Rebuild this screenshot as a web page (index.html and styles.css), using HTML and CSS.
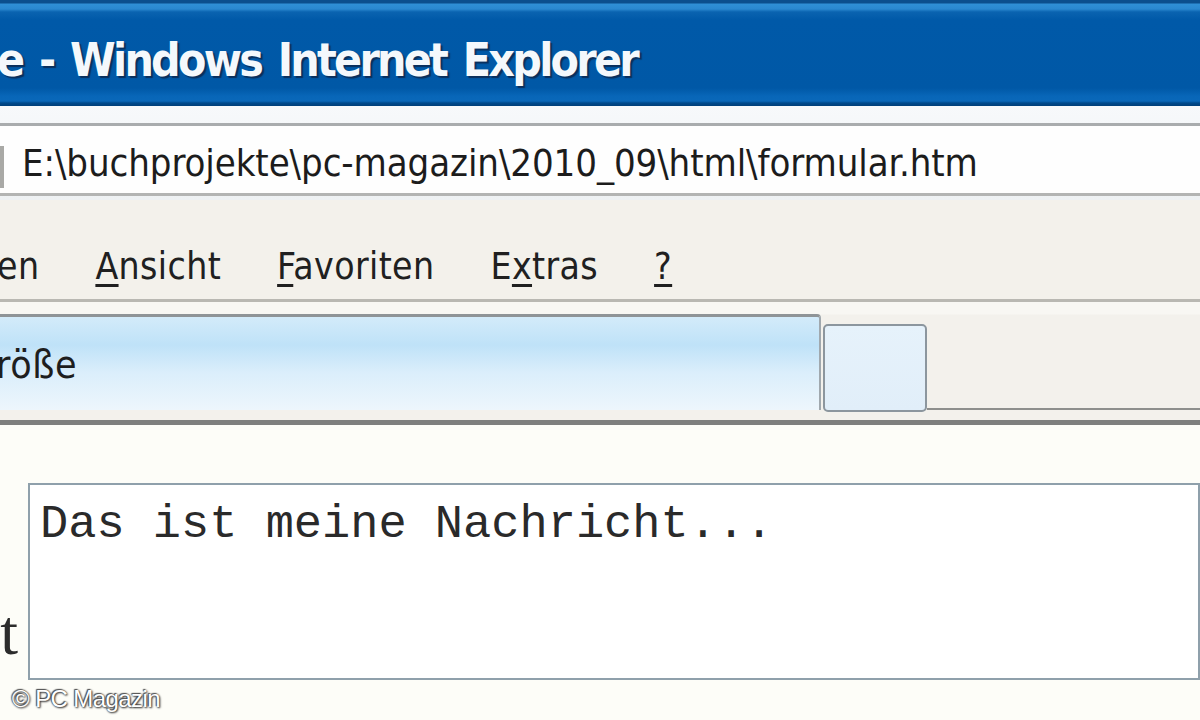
FILE: index.html
```html
<!DOCTYPE html>
<html lang="de">
<head>
<meta charset="utf-8">
<title>formular.htm - Windows Internet Explorer</title>
<link rel="stylesheet" href="styles.css">
</head>
<body>
<div class="window">
  <header class="titlebar">
    <span class="title">e - Windows Internet Explorer</span>
  </header>
  <div class="addrband">
    <div class="addrfield">
      <span class="addricon"></span>
      <span class="addrtext">E:\buchprojekte\pc-magazin\2010_09\html\formular.htm</span>
    </div>
  </div>
  <nav class="menubar">
    <span class="menuitem">en</span>
    <span class="menuitem"><u>A</u>nsicht</span>
    <span class="menuitem"><u>F</u>avoriten</span>
    <span class="menuitem">E<u>x</u>tras</span>
    <span class="menuitem"><u>?</u></span>
  </nav>
  <div class="tabbar">
    <div class="tabrow">
      <div class="tab active"><span class="tablabel">röße</span></div>
      <div class="tab newtab"></div>
      <div class="tabfill"></div>
    </div>
  </div>
  <main class="content">
    <div class="formrow">
      <label class="label" for="msg">t</label>
      <textarea id="msg" class="message">Das ist meine Nachricht...</textarea>
    </div>
    <div class="watermark">© PC Magazin</div>
  </main>
</div>
</body>
</html>
```
FILE: styles.css
```css
html, body {
  margin: 0;
  padding: 0;
}
body {
  width: 1200px;
  height: 720px;
  overflow: hidden;
  background: #fdfdf8;
}
.window {
  position: relative;
  width: 1200px;
  height: 720px;
  overflow: hidden;
  display: flex;
  flex-direction: column;
}

/* Title bar */
.titlebar {
  height: 106px;
  flex: none;
  display: flex;
  align-items: center;
  box-sizing: border-box;
  padding-top: 14px;
  background: linear-gradient(to bottom,
    #0b4f8e 0px, #0b4f8e 3px,
    #2f8fd6 4px, #2a88d0 9px,
    #0a63b0 12px, #0059a8 20px,
    #0058a6 88px, #0866b8 96px,
    #0a68b9 101px, #004a8c 103px, #003f7a 106px);
}
.title {
  font-family: "DejaVu Sans Condensed", "DejaVu Sans", sans-serif;
  font-weight: bold;
  font-size: 46px;
  color: #f4f8fc;
  letter-spacing: -2.75px;
  word-spacing: 5px;
  text-shadow: 2px 2px 1px #0a2f5c;
  white-space: nowrap;
  margin-left: -3px;
}

/* Address band */
.addrband {
  height: 94px;
  flex: none;
  box-sizing: border-box;
  padding-top: 17px;
  background: linear-gradient(to bottom, #f7f9fb, #eef1f3);
}
.addrfield {
  height: 73px;
  box-sizing: border-box;
  border-top: 3px solid #a9acae;
  border-bottom: 3px solid #b3b4b3;
  background: #fefefe;
  display: flex;
  align-items: center;
}
.addricon {
  width: 4px;
  height: 42px;
  margin-top: 14px;
  background: #a9a9a6;
  flex: none;
}
.addrtext {
  margin-left: 18px;
  margin-top: 6px;
  font-family: "DejaVu Sans Condensed", "DejaVu Sans", sans-serif;
  font-size: 38px;
  color: #1c1c1c;
  white-space: nowrap;
  letter-spacing: -0.1px;
}

/* Menu bar */
.menubar {
  height: 102px;
  flex: none;
  box-sizing: border-box;
  border-bottom: 3px solid #b9b8b2;
  background: #f3f1eb;
  display: flex;
  align-items: center;
  gap: 56px;
  padding-top: 34px;
  padding-left: 0;
  margin-left: -3px;
}
.menuitem {
  font-family: "DejaVu Sans Condensed", "DejaVu Sans", sans-serif;
  font-size: 37px;
  color: #202020;
  white-space: nowrap;
  letter-spacing: 0.4px;
}
.menuitem u {
  text-decoration-thickness: 3px;
  text-underline-offset: 5px;
}

/* Tab bar */
.tabbar {
  height: 123px;
  flex: none;
  box-sizing: border-box;
  padding-top: 12px;
  background: linear-gradient(to bottom, #f8f7f3 0, #f8f7f3 12px, #f3f1ec 13px);
  border-bottom: 5px solid #7e7f7e;
}
.tabrow {
  height: 96px;
  display: flex;
  align-items: flex-end;
}
.tab {
  box-sizing: border-box;
  flex: none;
}
.tab.active {
  width: 821px;
  height: 96px;
  border-top: 3px solid #8f9497;
  border-right: 2px solid #a0a8ae;
  border-top-right-radius: 4px;
  background: linear-gradient(to bottom, #d3ebfa 0, #bfe2f8 30%, #dbeefb 60%, #edf6fc 100%);
  display: flex;
  align-items: center;
}
.tablabel {
  font-family: "DejaVu Sans Condensed", "DejaVu Sans", sans-serif;
  font-size: 39px;
  color: #1e1e1e;
  margin-left: -4px;
  margin-top: 2px;
  letter-spacing: 0.6px;
}
.tab.newtab {
  width: 104px;
  height: 88px;
  margin-left: 2px;
  border: 2px solid #8c969e;
  border-radius: 5px;
  background: linear-gradient(to bottom, #e6f2fb, #e1eef9);
  margin-bottom: -2px;
}
.tabfill {
  flex: 1;
  height: 0;
  border-bottom: 2px solid #8e8f8d;
  margin-bottom: 0;
}

/* Content */
.content {
  flex: 1;
  background: #fdfdf8;
  padding-top: 58px;
}
.formrow {
  display: flex;
  align-items: flex-end;
}
.label {
  width: 18px;
  flex: none;
  overflow: hidden;
  text-align: right;
  font-family: "Liberation Serif", serif;
  font-size: 64px;
  line-height: 1;
  color: #2c2c2c;
  margin-bottom: 15px;
  white-space: nowrap;
}
.message {
  margin: 0 0 0 10px;
  width: 1200px;
  height: 197px;
  box-sizing: border-box;
  border: 2px solid #8fa0ab;
  border-radius: 0;
  background: #ffffff;
  resize: none;
  padding: 12px 0 0 10px;
  font-family: "Liberation Mono", "Courier New", monospace;
  font-size: 47px;
  line-height: 1.2;
  color: #2a2a2a;
  outline: none;
  overflow: hidden;
}
.watermark {
  position: absolute;
  left: 12px;
  bottom: 7px;
  font-family: "Liberation Sans Narrow", "Liberation Sans", sans-serif;
  font-size: 24px;
  color: #ffffff;
  letter-spacing: -0.6px;
  text-shadow: 0 0 2px #3a3a3a, 1px 1px 2px #3a3a3a, -1px -1px 1px #555;
}
```
